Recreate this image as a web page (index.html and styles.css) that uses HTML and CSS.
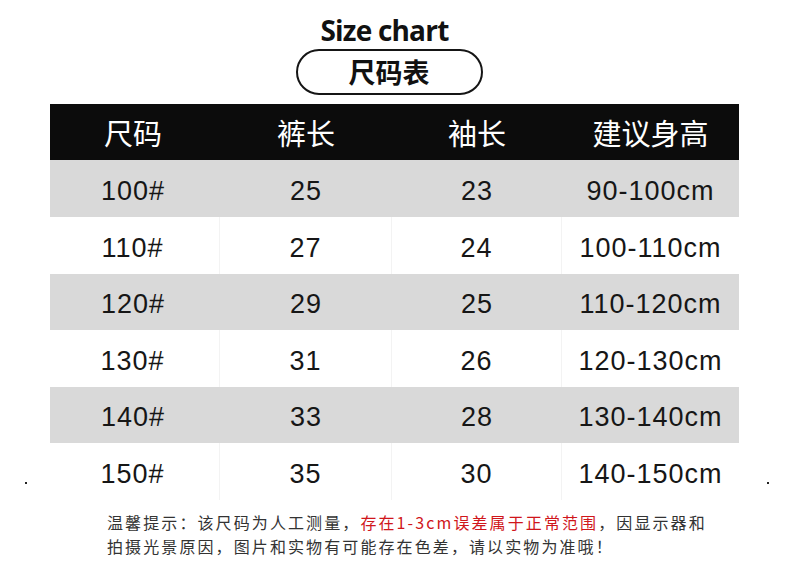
FILE: index.html
```html
<!DOCTYPE html>
<html lang="zh">
<head>
<meta charset="utf-8">
<link rel="stylesheet" href="styles.css">
</head>
<body>
<div class="page">
  <div class="title">Size chart</div>
  <div class="pill">尺码表</div>
  <div class="table">
    <div class="row head"><div>尺码</div><div>裤长</div><div>袖长</div><div>建议身高</div></div>
    <div class="row gray h57"><div>100#</div><div>25</div><div>23</div><div>90-100cm</div></div>
    <div class="row white h57"><div>110#</div><div>27</div><div>24</div><div>100-110cm</div></div>
    <div class="row gray h56"><div>120#</div><div>29</div><div>25</div><div>110-120cm</div></div>
    <div class="row white h57"><div>130#</div><div>31</div><div>26</div><div>120-130cm</div></div>
    <div class="row gray h56"><div>140#</div><div>33</div><div>28</div><div>130-140cm</div></div>
    <div class="row white h57"><div>150#</div><div>35</div><div>30</div><div>140-150cm</div></div>
  </div>
  <div class="note">
    <p>温馨提示：该尺码为人工测量，<span class="red">存在1-3cm误差属于正常范围</span>，因显示器和</p>
    <p>拍摄光景原因，图片和实物有可能存在色差，请以实物为准哦！</p>
  </div>
  <span class="dot dot-left"></span>
  <span class="dot dot-right"></span>
</div>
</body>
</html>
```

FILE: styles.css
```css
* { box-sizing: border-box; }
html, body { margin: 0; padding: 0; background: #fff; }
body { width: 790px; height: 577px; overflow: hidden; }
.page {
  position: relative;
  width: 790px;
  height: 577px;
  padding-top: 13px;
  display: flex;
  flex-direction: column;
}
.title {
  height: 34px;
  line-height: 34px;
  text-align: center;
  padding-right: 21px;
  font-family: "Open Sans", "Liberation Sans", sans-serif;
  font-weight: 700;
  font-size: 28px;
  letter-spacing: -0.8px;
  color: #111;
}
.pill {
  align-self: center;
  margin: 2px 12px 0 0;
  width: 187px;
  height: 46px;
  border: 2px solid #151515;
  border-radius: 23px;
  text-align: center;
  line-height: 41px;
  font-family: "Noto Sans CJK SC", sans-serif;
  font-weight: 700;
  font-size: 27px;
  color: #111;
}
.table {
  margin: 9px 0 0 50px;
  width: 689px;
  display: flex;
  flex-direction: column;
}
.row {
  display: grid;
  grid-template-columns: 170px 172px 170px 177px;
  align-items: center;
  text-align: center;
  font-family: "Liberation Sans", "Noto Sans CJK SC", sans-serif;
  font-size: 27px;
  letter-spacing: 1px;
  color: #161616;
}
.row > div { height: 100%; display: flex; align-items: center; justify-content: center; padding-top: 5px; }
.head {
  height: 56px;
  background: #0c0c0c;
  color: #fff;
  font-family: "Noto Sans CJK SC", sans-serif;
  font-size: 29px;
  font-weight: 400;
  letter-spacing: 0;
}
.head > div { padding-top: 0; padding-bottom: 1px; }
.h57 { height: 57px; }
.h56 { height: 56px; }
.gray { background: #d9d9d9; }
.white { background: #fff; }
.white > div { border-right: 1px solid #f3f3f3; }
.white > div:last-child { border-right: none; }
.row > div:first-child { padding-right: 4px; }
.note {
  margin: 10px 0 0 107px;
  font-family: "Noto Sans CJK SC", sans-serif;
  font-size: 16px;
  letter-spacing: 2.1px;
  color: #333;
}
.note p { margin: 0; line-height: 24px; white-space: nowrap; }
.red { color: #d0161b; }
.dot {
  position: absolute;
  width: 2px;
  height: 2px;
  background: #222;
  top: 482px;
}
.dot-left { left: 25px; }
.dot-right { left: 767px; }
```
